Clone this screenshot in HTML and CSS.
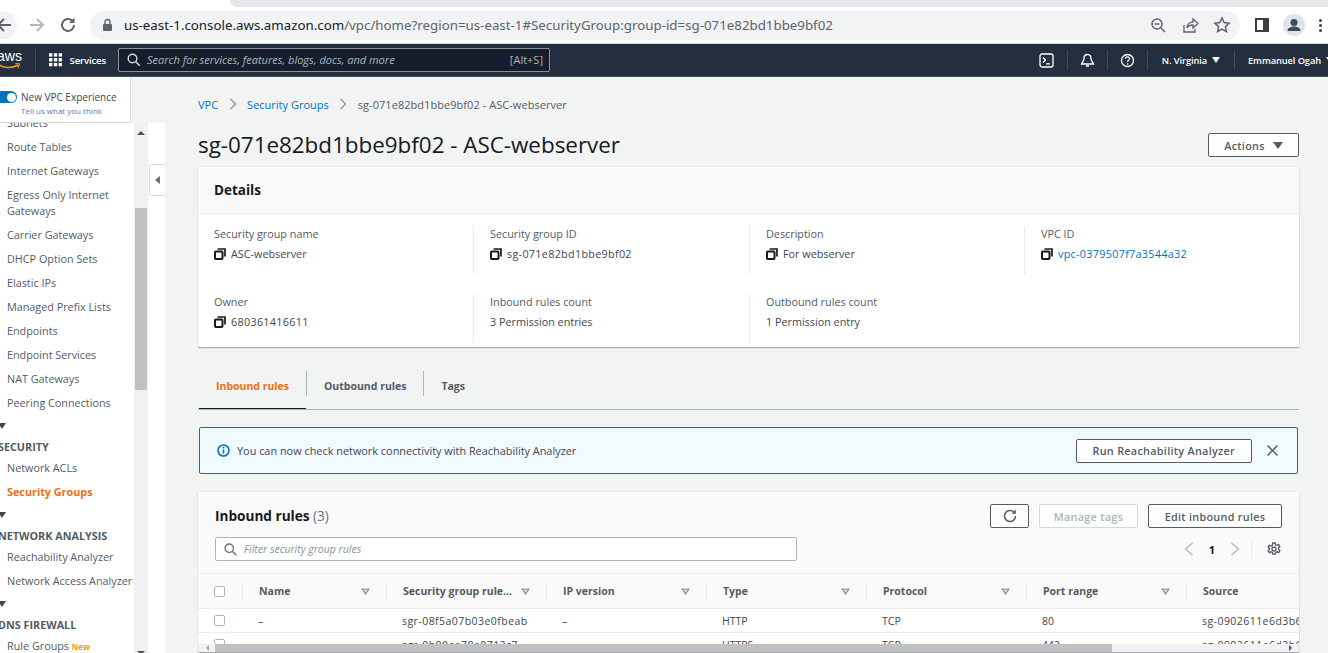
FILE: index.html
```html
<!DOCTYPE html>
<html lang="en">
<head>
  <meta charset="utf-8">
  <title>sg-071e82bd1bbe9bf02 - ASC-webserver</title>
  <link rel="stylesheet" href="styles.css">
</head>
<body>
<div class="app">

  <div class="tabstrip"><div class="tab-edge"></div></div>

  <div class="toolbar">
    <div class="back-btn">
      <svg width="18" height="18" viewBox="0 0 18 18"><path d="M16 9H3M9 3L3 9l6 6" fill="none" stroke="#5f6368" stroke-width="2"/></svg>
    </div>
    <svg class="fwd" width="18" height="18" viewBox="0 0 18 18"><path d="M2 9h13M9 3l6 6-6 6" fill="none" stroke="#b5b8bb" stroke-width="2"/></svg>
    <svg class="reload" width="18" height="18" viewBox="0 0 18 18"><path d="M15 9a6 6 0 1 1-1.8-4.3" fill="none" stroke="#5f6368" stroke-width="2"/><path d="M15.5 1.5v5.5H10z" fill="#5f6368"/></svg>
    <div class="omnibox">
      <svg width="11" height="14" viewBox="0 0 11 14"><rect x="1" y="6" width="9" height="7" rx="1" fill="#5f6368"/><path d="M3 6V4a2.5 2.5 0 0 1 5 0v2" fill="none" stroke="#5f6368" stroke-width="1.4"/></svg>
      <span class="url"><b>us-east-1.console.aws.amazon.com</b>/vpc/home?region=us-east-1#SecurityGroup:group-id=sg-071e82bd1bbe9bf02</span>
      <div class="omni-icons">
        <svg width="18" height="18" viewBox="0 0 18 18"><circle cx="8" cy="8" r="5" fill="none" stroke="#5f6368" stroke-width="1.5"/><path d="M12 12l4 4M5.500 8h5" stroke="#5f6368" stroke-width="1.5"/></svg>
        <svg width="18" height="18" viewBox="0 0 18 18"><path d="M3 9v7h11v-3M6 12c0-4 3-6 6-6V3l5 4.500L12 12V9c-3 0-5 1-6 3z" fill="none" stroke="#5f6368" stroke-width="1.3"/></svg>
        <svg width="18" height="18" viewBox="0 0 18 18"><path d="M9 2l2.100 4.600 5 .6-3.700 3.400 1 5L9 13.100 4.600 15.600l1-5L1.900 7.200l5-.6z" fill="none" stroke="#5f6368" stroke-width="1.5"/></svg>
      </div>
    </div>
    <svg class="panel-icon" width="14" height="14" viewBox="0 0 14 14"><rect x="1" y="1" width="12" height="12" fill="none" stroke="#3c4043" stroke-width="2"/><rect x="8" y="1" width="5" height="12" fill="#3c4043"/></svg>
    <div class="avatar">
      <svg width="22" height="22" viewBox="0 0 22 22"><circle cx="11" cy="8.500" r="3.500" fill="#3c4a5c"/><path d="M4.500 17c0-3 3-4.500 6.500-4.500s6.500 1.500 6.500 4.500z" fill="#3c4a5c"/></svg>
    </div>
    <div class="kebab"><i></i><i></i><i></i></div>
  </div>

  <header class="topnav">
    <div class="aws-logo">
      <span>aws</span>
      <svg width="24" height="7" viewBox="0 0 24 7"><path d="M1 1c6 4.500 14 4.500 20 1" fill="none" stroke="#f90" stroke-width="1.600"/><path d="M18 0l4.500 1-1.500 4" fill="none" stroke="#f90" stroke-width="1.200"/></svg>
    </div>
    <div class="services">
      <svg width="14" height="14" viewBox="0 0 14 14" fill="#fff"><rect width="3.500" height="3.500"/><rect x="5" width="3.500" height="3.500"/><rect x="10" width="3.500" height="3.500"/><rect y="5" width="3.500" height="3.500"/><rect x="5" y="5" width="3.500" height="3.500"/><rect x="10" y="5" width="3.500" height="3.500"/><rect y="10" width="3.500" height="3.500"/><rect x="5" y="10" width="3.500" height="3.500"/><rect x="10" y="10" width="3.500" height="3.500"/></svg>
      <span>Services</span>
    </div>
    <div class="searchbar">
      <svg width="14" height="14" viewBox="0 0 14 14"><circle cx="5.500" cy="5.500" r="4.300" fill="none" stroke="#d5dbdb" stroke-width="1.400"/><path d="M8.800 8.800l4 4" stroke="#d5dbdb" stroke-width="1.500"/></svg>
      <em>Search for services, features, blogs, docs, and more</em>
      <span>[Alt+S]</span>
    </div>
    <div class="nav-right">
      <div class="nav-item">
        <svg width="15" height="15" viewBox="0 0 15 15"><rect x="1" y="1" width="13" height="13" rx="2" fill="none" stroke="#fff" stroke-width="1.300"/><path d="M4 4.500L6.500 7 4 9.500M7 10.800h4" fill="none" stroke="#fff" stroke-width="1.200"/></svg>
      </div>
      <div class="nav-item">
        <svg width="15" height="15" viewBox="0 0 15 15"><path d="M7.500 1.500c-2.500 0-3.500 2-3.500 4 0 2.500-2 4-2.500 5.500h12c-.5-1.500-2.500-3-2.500-5.500 0-2-1-4-3.500-4zM6 13h3" fill="none" stroke="#fff" stroke-width="1.300"/></svg>
      </div>
      <div class="nav-item">
        <svg width="15" height="15" viewBox="0 0 15 15"><circle cx="7.500" cy="7.500" r="6" fill="none" stroke="#fff" stroke-width="1.300"/><path d="M5.500 5.800c0-2.600 4-2.600 4 0 0 1.500-2 1.500-2 3.200" fill="none" stroke="#fff" stroke-width="1.200"/><circle cx="7.500" cy="11" r=".8" fill="#fff"/></svg>
      </div>
      <div class="nav-item nav-text region">N. Virginia <i class="caret-down"></i></div>
      <div class="nav-item nav-text user">Emmanuel Ogah <i class="caret-down"></i></div>
    </div>
  </header>

  <div class="main">
    <aside class="sidebar">
      <div class="feedback">
        <div class="toggle-row"><span class="toggle"></span>New VPC Experience</div>
        <a class="tell-us">Tell us what you think</a>
      </div>
      <div class="side-body">
        <nav class="side-list">
          <a class="side-link first">Subnets</a>
          <a class="side-link">Route Tables</a>
          <a class="side-link">Internet Gateways</a>
          <a class="side-link">Egress Only Internet Gateways</a>
          <a class="side-link">Carrier Gateways</a>
          <a class="side-link">DHCP Option Sets</a>
          <a class="side-link">Elastic IPs</a>
          <a class="side-link">Managed Prefix Lists</a>
          <a class="side-link">Endpoints</a>
          <a class="side-link">Endpoint Services</a>
          <a class="side-link">NAT Gateways</a>
          <a class="side-link">Peering Connections</a>
          <i class="side-arrow"></i>
          <h4 class="side-head">SECURITY</h4>
          <a class="side-link">Network ACLs</a>
          <a class="side-link active">Security Groups</a>
          <i class="side-arrow"></i>
          <h4 class="side-head">NETWORK ANALYSIS</h4>
          <a class="side-link">Reachability Analyzer</a>
          <a class="side-link">Network Access Analyzer</a>
          <i class="side-arrow"></i>
          <h4 class="side-head">DNS FIREWALL</h4>
          <a class="side-link">Rule Groups <span class="new">New</span></a>
        </nav>
        <div class="side-scroll">
          <i class="sb-up"></i>
          <div class="sb-thumb"></div>
          <i class="sb-down"></i>
        </div>
        <div class="side-gutter">
          <div class="collapse"><i></i></div>
        </div>
      </div>
    </aside>

    <main class="content">
      <div class="crumbs">
        <a>VPC</a>
        <svg width="8" height="12" viewBox="0 0 8 12"><path d="M1.500 1l5 5-5 5" fill="none" stroke="#879596" stroke-width="1.300"/></svg>
        <a>Security Groups</a>
        <svg width="8" height="12" viewBox="0 0 8 12"><path d="M1.500 1l5 5-5 5" fill="none" stroke="#879596" stroke-width="1.300"/></svg>
        <span class="id">sg-071e82bd1bbe9bf02 - ASC-webserver</span>
      </div>

      <div class="title-row">
        <h1>sg-071e82bd1bbe9bf02 - ASC-webserver</h1>
        <button class="btn actions">Actions <i class="caret-down dark"></i></button>
      </div>

      <section class="card details">
        <h2 class="card-head">Details</h2>
        <div class="detail-grid">
          <div class="cell">
            <label>Security group name</label>
            <div class="val"><svg class="copy" width="12" height="12"><use href="#copy-icon"/></svg>ASC-webserver</div>
          </div>
          <div class="cell">
            <label>Security group ID</label>
            <div class="val id"><svg class="copy" width="12" height="12"><use href="#copy-icon"/></svg>sg-071e82bd1bbe9bf02</div>
          </div>
          <div class="cell">
            <label>Description</label>
            <div class="val"><svg class="copy" width="12" height="12"><use href="#copy-icon"/></svg>For webserver</div>
          </div>
          <div class="cell">
            <label>VPC ID</label>
            <div class="val id"><svg class="copy" width="12" height="12"><use href="#copy-icon"/></svg><a>vpc-0379507f7a3544a32</a></div>
          </div>
          <div class="cell">
            <label>Owner</label>
            <div class="val id"><svg class="copy" width="12" height="12"><use href="#copy-icon"/></svg>680361416611</div>
          </div>
          <div class="cell">
            <label>Inbound rules count</label>
            <div class="val">3 Permission entries</div>
          </div>
          <div class="cell">
            <label>Outbound rules count</label>
            <div class="val">1 Permission entry</div>
          </div>
        </div>
      </section>

      <div class="tabs">
        <a class="tab active">Inbound rules</a>
        <a class="tab">Outbound rules</a>
        <a class="tab">Tags</a>
      </div>

      <div class="flash">
        <svg width="13" height="13" viewBox="0 0 13 13"><circle cx="6.500" cy="6.500" r="5.500" fill="none" stroke="#0073bb" stroke-width="1.600"/><path d="M6.500 5.500v4" stroke="#0073bb" stroke-width="1.600"/><circle cx="6.500" cy="3.700" r=".9" fill="#0073bb"/></svg>
        <span class="flash-text">You can now check network connectivity with Reachability Analyzer</span>
        <button class="btn run">Run Reachability Analyzer</button>
        <svg class="flash-x" width="11" height="11" viewBox="0 0 11 11"><path d="M.5.500l10 10M10.500.500l-10 10" stroke="#545b64" stroke-width="1.500"/></svg>
      </div>

      <section class="card rules">
        <div class="rules-top">
          <h2 class="rules-title">Inbound rules <span>(3)</span></h2>
          <div class="rules-btns">
            <button class="btn refresh">
              <svg width="14" height="14" viewBox="0 0 14 14"><path d="M12.500 7a5.500 5.500 0 1 1-1.700-4" fill="none" stroke="#545b64" stroke-width="1.500"/><path d="M12.800.500v4.300H8.500z" fill="#545b64"/></svg>
            </button>
            <button class="btn disabled">Manage tags</button>
            <button class="btn edit">Edit inbound rules</button>
          </div>
        </div>
        <div class="rules-filter">
          <div class="filter-input">
            <svg width="13" height="13" viewBox="0 0 13 13"><circle cx="5.200" cy="5.200" r="4.200" fill="none" stroke="#687078" stroke-width="1.300"/><path d="M8.300 8.300l4 4" stroke="#687078" stroke-width="1.400"/></svg>
            <em>Filter security group rules</em>
          </div>
          <div class="pager">
            <svg width="10" height="14" viewBox="0 0 10 14"><path d="M8.500 1l-7 6 7 6" fill="none" stroke="#aab7b8" stroke-width="1.300"/></svg>
            <b>1</b>
            <svg width="10" height="14" viewBox="0 0 10 14"><path d="M1.500 1l7 6-7 6" fill="none" stroke="#aab7b8" stroke-width="1.300"/></svg>
            <span class="pager-line"></span>
            <svg width="14" height="14" viewBox="0 0 14 14"><circle cx="7" cy="7" r="2" fill="none" stroke="#545b64" stroke-width="1.300"/><path d="M5.800 1h2.400l.4 1.700 1.500.7 1.600-.8 1.200 2-1.300 1.200v1.600l1.300 1.200-1.200 2-1.600-.8-1.500.7-.4 1.700H5.800l-.4-1.700-1.500-.7-1.600.8-1.200-2 1.300-1.200V6.400L1.100 5.200l1.200-2 1.600.8 1.500-.7z" fill="none" stroke="#545b64" stroke-width="1.300"/></svg>
          </div>
        </div>

        <div class="rule-table">
          <div class="tr head">
            <div class="td chk"><i class="box"></i></div>
            <div class="td">Name<svg class="sort" width="9" height="7"><use href="#sort-icon"/></svg></div>
            <div class="td">Security group rule...<svg class="sort" width="9" height="7"><use href="#sort-icon"/></svg></div>
            <div class="td">IP version<svg class="sort" width="9" height="7"><use href="#sort-icon"/></svg></div>
            <div class="td">Type<svg class="sort" width="9" height="7"><use href="#sort-icon"/></svg></div>
            <div class="td">Protocol<svg class="sort" width="9" height="7"><use href="#sort-icon"/></svg></div>
            <div class="td">Port range<svg class="sort" width="9" height="7"><use href="#sort-icon"/></svg></div>
            <div class="td">Source</div>
          </div>
          <div class="tr">
            <div class="td chk"><i class="box"></i></div>
            <div class="td">–</div>
            <div class="td id">sgr-08f5a07b03e0fbeab</div>
            <div class="td">–</div>
            <div class="td">HTTP</div>
            <div class="td">TCP</div>
            <div class="td">80</div>
            <div class="td id">sg-0902611e6d3b6b</div>
          </div>
          <div class="tr">
            <div class="td chk"><i class="box"></i></div>
            <div class="td">–</div>
            <div class="td id">sgr-0b00ea78a0712c7</div>
            <div class="td">–</div>
            <div class="td">HTTPS</div>
            <div class="td">TCP</div>
            <div class="td">443</div>
            <div class="td id">sg-0902611e6d3b6b</div>
          </div>
        </div>
        <div class="hscroll"><i class="hs-left"></i><div class="hs-thumb"></div><i class="hs-right"></i></div>
      </section>
    </main>
  </div>
</div>

<svg width="0" height="0" class="defs">
  <symbol id="copy-icon" viewBox="0 0 12 12">
    <rect x="1" y="3.500" width="7.500" height="7.500" rx=".8" fill="none" stroke="#16191f" stroke-width="2"/>
    <path d="M3.500 1h7.500v7.500" fill="none" stroke="#16191f" stroke-width="1.700"/>
  </symbol>
  <symbol id="sort-icon" viewBox="0 0 9 7">
    <path d="M1 1h7L4.500 6z" fill="#d5dbdb" stroke="#879596" stroke-width="1.200"/>
  </symbol>
</svg>
</body>
</html>
```

FILE: styles.css
```css
* {
  box-sizing: border-box;
}
html, body {
  margin: 0;
  height: 100%;
  overflow: hidden;
}
body {
  font-family: "Open Sans", "Noto Sans", sans-serif;
  font-size: 11px;
  color: #16191f;
  background: #f2f3f3;
}
i {
  font-style: normal;
}
.defs {
  position: absolute;
}
.app {
  display: flex;
  flex-direction: column;
  height: 653px;
  overflow: hidden;
}
.id {
  letter-spacing: .45px;
}

/* browser chrome */
.tabstrip {
  height: 7px;
  background: #fff;
  display: flex;
  flex: none;
}
.tab-edge {
  margin-left: 230px;
  flex: 1;
  background: #e5e8eb;
  border-bottom-left-radius: 8px;
}
.toolbar {
  height: 37px;
  flex: none;
  background: #fff;
  display: flex;
  align-items: center;
  border-bottom: 1px solid #dadce0;
}
.back-btn {
  width: 26px;
  height: 28px;
  margin-left: -9px;
  border-radius: 50%;
  background: #f1f3f4;
  display: flex;
  align-items: center;
  justify-content: center;
  flex: none;
}
.fwd {
  margin-left: 11px;
  flex: none;
}
.reload {
  margin-left: 13px;
  flex: none;
}
.omnibox {
  margin-left: 13px;
  width: 1150px;
  height: 29px;
  flex: none;
  border-radius: 15px;
  background: #f1f3f4;
  display: flex;
  align-items: center;
  padding: 0 9px 0 12px;
}
.url {
  margin-left: 11px;
  font-size: 13.300px;
  font-family: "Noto Sans", sans-serif;
  color: #5f6368;
  white-space: nowrap;
}
.url b {
  font-weight: 400;
  color: #202124;
}
.omni-icons {
  margin-left: auto;
  display: flex;
  gap: 14px;
}
.panel-icon {
  margin-left: 15px;
  flex: none;
}
.avatar {
  width: 22px;
  height: 22px;
  margin-left: 14px;
  border-radius: 50%;
  background: #dfe3ea;
  flex: none;
}
.kebab {
  margin-left: 14px;
  display: flex;
  flex-direction: column;
  gap: 2px;
  flex: none;
}
.kebab i {
  width: 3px;
  height: 3px;
  background: #3c4043;
  border-radius: 50%;
}

/* aws top bar */
.topnav {
  height: 33px;
  flex: none;
  background: #232f3e;
  border-bottom: 1px solid #3c4a5c;
  color: #fff;
  display: flex;
  align-items: center;
}
.aws-logo {
  margin-left: -3px;
  width: 25px;
  display: flex;
  flex-direction: column;
  flex: none;
}
.aws-logo span {
  font-family: "Liberation Sans", sans-serif;
  font-size: 14px;
  line-height: 11px;
}
.aws-logo svg {
  margin-top: 1px;
}
.services {
  margin-left: 13px;
  padding-left: 13px;
  height: 22px;
  border-left: 1px solid #3c4a5c;
  display: flex;
  align-items: center;
  gap: 7px;
  font-size: 9.700px;
  font-weight: 600;
  letter-spacing: -.2px;
  width: 71px;
  flex: none;
}
.searchbar {
  margin-left: 12px;
  width: 432px;
  height: 24px;
  background: #161e2d;
  border: 1px solid #879596;
  border-radius: 2px;
  display: flex;
  align-items: center;
  padding: 0 6px 1px 8px;
  flex: none;
  color: #aab7b8;
  font-size: 11px;
}
.searchbar em {
  margin-left: 6px;
  white-space: nowrap;
}
.searchbar span {
  margin-left: auto;
}
.nav-right {
  margin-left: auto;
  display: flex;
  align-items: center;
  height: 100%;
}
.nav-item {
  height: 20px;
  width: 40px;
  display: flex;
  align-items: center;
  justify-content: center;
  border-left: 1px solid #3c4a5c;
}
.nav-item:first-child {
  border-left: 0;
}
.nav-text {
  width: auto;
  gap: 5px;
  font-size: 9.300px;
  font-weight: 600;
  letter-spacing: -.1px;
  white-space: nowrap;
}
.region {
  padding: 0 14px 0 14px;
}
.user {
  padding-left: 13px;
  margin-right: -6px;
}
.caret-down {
  display: inline-block;
  border-left: 4px solid transparent;
  border-right: 4px solid transparent;
  border-top: 6px solid #fff;
}
.caret-down.dark {
  border-top-color: #545b64;
  border-left-width: 5px;
  border-right-width: 5px;
  border-top-width: 7px;
  margin-left: 8px;
}

/* sidebar */
.main {
  flex: 1;
  display: flex;
  min-height: 0;
}
.sidebar {
  width: 165px;
  flex: none;
  display: flex;
  flex-direction: column;
}
.feedback {
  width: 131px;
  height: 46px;
  flex: none;
  background: #fff;
  border-right: 1px solid #d5dbdb;
  border-bottom: 1px solid #d5dbdb;
  padding-top: 13px;
  position: relative;
  z-index: 1;
}
.toggle-row {
  display: flex;
  align-items: center;
  font-size: 10px;
  line-height: 14px;
  color: #414750;
  white-space: nowrap;
}
.toggle {
  width: 18px;
  height: 12px;
  margin: 0 4px 0 -1px;
  background: #0073bb;
  border-radius: 0 7px 7px 0;
  position: relative;
}
.toggle::after {
  content: "";
  position: absolute;
  right: 1.500px;
  top: 1.500px;
  width: 9px;
  height: 9px;
  background: #fff;
  border-radius: 50%;
}
.tell-us {
  display: block;
  margin: 1px 0 0 21px;
  font-size: 8px;
  line-height: 12px;
  color: #6b6fb5;
  white-space: nowrap;
}
.side-body {
  flex: 1;
  min-height: 0;
  display: flex;
  background: #fff;
}
.side-list {
  width: 134px;
  flex: none;
  overflow: hidden;
  height: 546px;
  margin-top: -8px;
}
.side-link {
  display: block;
  padding-left: 7px;
  width: 134px;
  font-size: 10.800px;
  line-height: 16px;
  margin-bottom: 8px;
  color: #545b64;
  white-space: nowrap;
}
.side-link:nth-child(4) {
  white-space: normal;
}
.side-link.active {
  color: #ec7211;
  font-weight: 700;
}
.new {
  font-size: 8px;
  font-weight: 700;
  color: #ff9900;
}
.side-arrow {
  display: block;
  width: 0;
  margin: 12px 0 0 -2px;
  border-left: 4px solid transparent;
  border-right: 4px solid transparent;
  border-top: 6px solid #414750;
}
.side-head {
  margin: 10px 0 5px -2px;
  font-size: 10.800px;
  line-height: 16px;
  font-weight: 700;
  color: #545b64;
  white-space: nowrap;
}
.side-scroll {
  width: 14px;
  flex: none;
  height: 100%;
  background: #f1f1f1;
  display: flex;
  flex-direction: column;
  align-items: center;
}
.sb-up {
  margin-top: 8px;
  border-left: 4px solid transparent;
  border-right: 4px solid transparent;
  border-bottom: 4px solid #505050;
}
.sb-thumb {
  width: 12px;
  height: 182px;
  margin-top: 73px;
  background: #c1c1c1;
}
.sb-down {
  margin-top: auto;
  margin-bottom: -2px;
  border-left: 4px solid transparent;
  border-right: 4px solid transparent;
  border-top: 4px solid #505050;
}
.side-gutter {
  flex: 1;
  padding-top: 41px;
}
.collapse {
  margin-left: 1px;
  height: 32px;
  background: #fff;
  border: 1px solid #d5dbdb;
  border-right: 0;
  border-radius: 4px 0 0 4px;
  display: flex;
  align-items: center;
  justify-content: center;
}
.collapse i {
  border-top: 4.500px solid transparent;
  border-bottom: 4.500px solid transparent;
  border-right: 5px solid #687078;
}

/* content */
.content {
  flex: 1;
  min-width: 0;
  padding: 0 29px 0 33px;
  color: #16191f;
}
.crumbs {
  height: 56px;
  padding-bottom: 2px;
  display: flex;
  align-items: center;
  gap: 10.500px;
  font-size: 11px;
  color: #545b64;
  white-space: nowrap;
}
.crumbs .id {
  letter-spacing: .05px;
}
.crumbs a {
  color: #0073bb;
}
.title-row {
  height: 24px;
  display: flex;
  align-items: center;
  justify-content: space-between;
}
.title-row h1 {
  margin: 0 0 2px;
  font-size: 22.400px;
  font-weight: 400;
  color: #16191f;
  white-space: nowrap;
}
.btn {
  height: 24px;
  padding: 0 16px;
  border: 1px solid #545b64;
  border-radius: 2px;
  background: #fff;
  font-family: inherit;
  font-size: 10.800px;
  font-weight: 600;
  letter-spacing: .3px;
  color: #545b64;
  white-space: nowrap;
}
.btn.actions {
  width: 91px;
  padding: 0;
  display: flex;
  align-items: center;
  justify-content: center;
}
.card {
  background: #fff;
  border-top: 1px solid #eaeded;
  box-shadow: 0 1px 1px rgba(0, 27, 54, .3), 1px 1px 1px -1px rgba(0, 27, 54, .2);
}
.details {
  height: 181px;
  margin-top: 9px;
}
.card-head {
  margin: 0;
  height: 47px;
  padding: 0 16px;
  display: flex;
  align-items: center;
  font-size: 13.500px;
  font-weight: 700;
  background: #fafafa;
  border-bottom: 1px solid #eaeded;
}
.detail-grid {
  display: grid;
  grid-template-columns: 276px 276px 275px 276px;
  grid-auto-rows: 68px;
  padding: 10px 0 0 0;
}
.cell {
  padding-left: 16px;
  height: 48px;
  margin-top: 2px;
  border-right: 1px solid #eaeded;
  font-size: 10.800px;
  line-height: 16px;
  color: #545b64;
}
.cell:nth-child(4), .cell:nth-child(7) {
  border-right: 0;
}
.cell label {
  display: block;
}
.val {
  margin-top: 4px;
  display: flex;
  align-items: center;
  color: #414750;
}
.val.id {
  letter-spacing: .3px;
}
.val a {
  color: #0073bb;
}
.copy {
  margin-right: 5px;
  flex: none;
}

/* tabs */
.tabs {
  margin-top: 22px;
  height: 41px;
  display: flex;
  border-bottom: 1px solid #aab7b8;
  padding-left: 1px;
  align-items: flex-start;
}
.tab {
  padding: 4px 17px 0;
  display: flex;
  align-items: center;
  height: 25px;
  margin-top: 2px;
  font-size: 10.500px;
  font-weight: 700;
  color: #545b64;
  border-right: 1px solid #aab7b8;
  white-space: nowrap;
}
.tab:last-child {
  border-right: 0;
}
.tab.active {
  color: #ec7211;
  position: relative;
}
.tab.active::after {
  content: "";
  position: absolute;
  left: 0;
  right: 0;
  top: 37px;
  height: 1px;
  background: #16191f;
}

/* flash */
.flash {
  margin: 17px 1px 0;
  height: 47px;
  background: #f1faff;
  border: 1px solid #0073bb;
  border-radius: 2px;
  display: flex;
  align-items: center;
  padding: 0 19px 0 17px;
  color: #414750;
  font-size: 10.900px;
}
.flash-text {
  margin-left: 7px;
  white-space: nowrap;
}
.run {
  margin-left: auto;
}
.flash-x {
  margin-left: 15px;
}

/* rules */
.rules {
  margin-top: 17px;
  height: 161px;
  background: #fafafa;
  position: relative;
  overflow: hidden;
}
.rules-top {
  display: flex;
  justify-content: space-between;
  padding: 12px 17px 0 17px;
  height: 37px;
}
.rules-title {
  margin: 0;
  font-size: 13.600px;
  font-weight: 700;
  line-height: 24px;
}
.rules-title span {
  font-weight: 400;
  color: #687078;
}
.rules-btns {
  display: flex;
  gap: 10px;
}
.btn.disabled {
  width: 99px;
  padding: 0;
  border-color: #d5dbdb;
  color: #aab7b8;
}
.btn.edit {
  width: 134px;
  padding: 0;
}
.btn.refresh {
  width: 39px;
  padding: 0;
  display: flex;
  align-items: center;
  justify-content: center;
}
.rules-filter {
  display: flex;
  justify-content: space-between;
  align-items: center;
  padding: 8px 17px 0 17px;
}
.filter-input {
  width: 582px;
  height: 24px;
  background: #fff;
  border: 1px solid #aab7b8;
  border-radius: 2px;
  display: flex;
  align-items: center;
  padding-left: 8px;
  gap: 7px;
  font-size: 10.500px;
  color: #879596;
}
.pager {
  display: flex;
  align-items: center;
  gap: 15px;
  margin-right: 1px;
  font-size: 11px;
}
.pager-line {
  width: 1px;
  height: 20px;
  background: #eaeded;
  margin-left: -4px;
}
.rule-table {
  margin-top: 12px;
  border-top: 1px solid #eaeded;
  font-size: 10.500px;
  white-space: nowrap;
}
.tr {
  display: grid;
  grid-template-columns: 44px 144px repeat(5, 160px) 1fr;
  height: 24px;
  background: #fff;
  border-bottom: 1px solid #eaeded;
  color: #414750;
}
.tr.head {
  height: 35px;
  background: #fafafa;
  font-weight: 700;
  color: #545b64;
}
.td {
  display: flex;
  align-items: center;
  padding-left: 16px;
  overflow: hidden;
}
.head .td {
  padding-left: 17px;
  position: relative;
}
.head .td::before {
  content: "";
  position: absolute;
  left: 0;
  top: 10px;
  bottom: 6px;
  width: 1px;
  background: #eaeded;
}
.head .td.chk {
  padding-left: 16px;
}
.head .td.chk::before {
  display: none;
}
.sort {
  position: absolute;
  right: 16px;
  top: 14px;
}
.box {
  width: 11px;
  height: 11px;
  border: 1px solid #aab7b8;
  border-radius: 2px;
  background: #fff;
}
.hscroll {
  position: absolute;
  left: 0;
  right: 0;
  bottom: 0;
  height: 8px;
  background: #f1f1f1;
  display: flex;
  align-items: center;
  padding: 0 7px 0 8px;
}
.hs-left {
  border-top: 3px solid transparent;
  border-bottom: 3px solid transparent;
  border-right: 3px solid #a3a3a3;
}
.hs-thumb {
  margin-left: 6px;
  width: 897px;
  height: 8px;
  background: #c1c1c1;
}
.hs-right {
  margin-left: auto;
  border-top: 3px solid transparent;
  border-bottom: 3px solid transparent;
  border-left: 3px solid #505050;
}
```
